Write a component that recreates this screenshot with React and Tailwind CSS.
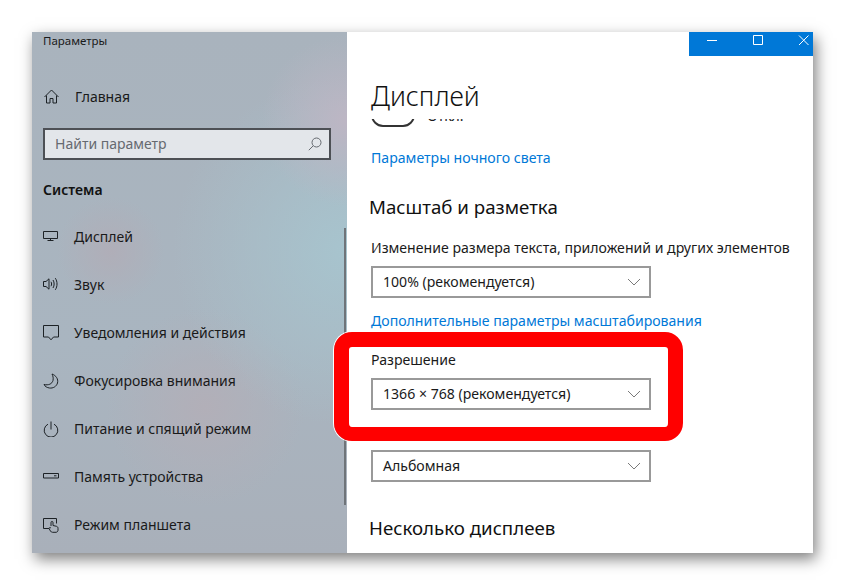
const menuItems = [
  { name: "Дисплей", icon: <MonitorIcon /> },
  { name: "Звук", icon: <SoundIcon /> },
  { name: "Уведомления и действия", icon: <NotifyIcon /> },
  { name: "Фокусировка внимания", icon: <MoonIcon /> },
  { name: "Питание и спящий режим", icon: <PowerIcon /> },
  { name: "Память устройства", icon: <StorageIcon /> },
  { name: "Режим планшета", icon: <TabletIcon /> },
];

function Icon({ children }) {
  return (
    <svg
      width="16"
      height="16"
      viewBox="0 0 16 16"
      fill="none"
      stroke="#1d2226"
      strokeWidth="1"
      className="shrink-0"
    >
      {children}
    </svg>
  );
}

function HomeIcon() {
  return (
    <Icon>
      <path d="M1.500 8 8.500 1l7 7M3.500 6.500v7.500h3.500V9.500h3v4.500h3.500V6.500" />
    </Icon>
  );
}

function MonitorIcon() {
  return (
    <Icon>
      <path d="M.5 2.500h14v7H.5zM7.500 9.500v2M4.500 11.500h6" />
    </Icon>
  );
}

function SoundIcon() {
  return (
    <Icon>
      <path d="M.5 4.500h2.500L6 1.800v10.400L3 9.500H.5zM8 4.800c.8 1.300.8 3.100 0 4.400M10 3c1.500 2.300 1.500 5.700 0 8M12.300 1.200c2.300 3.300 2.300 8.300 0 11.600" />
    </Icon>
  );
}

function NotifyIcon() {
  return (
    <Icon>
      <path d="M.5 .5h15v11.500H10.500L8 14.800 5.500 12h-5z" />
    </Icon>
  );
}

function MoonIcon() {
  return (
    <Icon>
      <path d="M9 1c4 1.500 6.500 5 5.500 9-1 3.500-4.500 5.500-8 5C4 14.700 2 13.500 1 11.500c4.500 1 8-.5 9-4 .5-2.300 0-4.500-1-6.500z" />
    </Icon>
  );
}

function PowerIcon() {
  return (
    <Icon>
      <path d="M5 3.200a6.800 6.800 0 1 0 6 0M8 .5v8" />
    </Icon>
  );
}

function StorageIcon() {
  return (
    <Icon>
      <path d="M.5 4.500h15v4.500H.5zM11 6.800h2.500" />
    </Icon>
  );
}

function TabletIcon() {
  return (
    <Icon>
      <path d="M6 11.500H.5v-10h13v5M8 9V5.500a1 1 0 0 1 2 0V8.500l3.500.8c1 .3 1.500 1 1.500 2v2c0 1-1 2-2 2H9.500c-1 0-1.500-.5-2-1.200L6 11.500c0-1 1-1.200 2-.5" />
    </Icon>
  );
}

function Chevron() {
  return (
    <svg width="14" height="8" viewBox="0 0 14 8" fill="none" stroke="#7a7a7a">
      <path d="M1 1l6 6 6-6" />
    </svg>
  );
}

function Select({ value }) {
  return (
    <div className="flex h-8 w-[280px] items-center justify-between border-2 border-[#999999] pl-[10px] pr-[8px] text-[14.1px] text-[#1a1a1a]">
      <span>{value}</span>
      <Chevron />
    </div>
  );
}

export default function App() {
  return (
    <div className="h-[585px] w-[845px] bg-white pl-8 pt-8 font-['Noto_Sans',sans-serif]">
      <div className="relative flex h-[521px] w-[781px] shadow-[3px_6px_14px_rgba(0,0,0,0.5)]">
        {/* Sidebar */}
        <aside className="relative w-[315px] shrink-0 bg-[radial-gradient(circle_at_100%_17%,#bdb6c4_0,transparent_16%),radial-gradient(circle_at_100%_42%,#a7c4ce_0,transparent_40%),radial-gradient(circle_at_55%_72%,#b2afb8_0,transparent_24%),radial-gradient(circle_at_25%_42%,#b0aeb8_0,transparent_14%),linear-gradient(180deg,#a9b3bd,#a9b5c0_60%,#a9b0ba)] pl-[11px]">
          <div className="h-[18px] text-[11.5px] leading-[18px] text-[#1a1a1a]">
            Параметры
          </div>
          <div className="mt-[23px] flex h-12 items-center gap-4 text-[14px] text-[#1a1a1a]">
            <HomeIcon />
            <span className="pb-[2px]">Главная</span>
          </div>
          <div className="mt-[7px] flex h-8 w-[288px] items-center justify-between border-2 border-[#4d5055] bg-[#e3e6ea] pl-[10px] pr-[7px] text-[14px] text-[#666a70]">
            <span className="pb-[2px]">Найти параметр</span>
            <svg width="14" height="14" viewBox="0 0 14 14" fill="none" stroke="#666a70">
              <circle cx="8.500" cy="5.500" r="4.500" />
              <path d="M5.200 8.800.8 13.200" />
            </svg>
          </div>
          <div className="mt-[18px] flex h-6 items-center pb-[2px] text-[14px] font-semibold text-[#111111]">
            Система
          </div>
          <nav className="mt-[11px]">
            {menuItems.map((item) => (
              <div
                key={item.name}
                className="flex h-12 items-center gap-[15px] text-[14px] text-[#1a1a1a]"
              >
                {item.icon}
                <span className="pb-[2px]">{item.name}</span>
              </div>
            ))}
          </nav>
          <div className="absolute left-[312px] top-[196px] h-[277px] w-[2px] bg-[#6f7479]" />
        </aside>

        {/* Content */}
        <main className="flex-1 overflow-hidden bg-white pl-6 text-[#1a1a1a]">
          <h1 className="mt-[43px] h-[44px] text-[26.6px] font-light leading-[42px] text-[#111111]">
            Дисплей
          </h1>
          <div className="h-[8px] overflow-hidden">
            <div className="-mt-[16px] flex items-center gap-[12px]">
              <div className="h-6 w-11 rounded-full border-2 border-[#333333]" />
              <span className="text-[14px]">Откл.</span>
            </div>
          </div>
          <a className="mt-[21px] block h-5 text-[14.1px] leading-5 text-[#0078d7]">
            Параметры ночного света
          </a>
          <h2 className="-ml-[2px] mt-[25px] h-[28px] text-[18.7px] leading-[28px] text-[#111111]">
            Масштаб и разметка
          </h2>
          <p className="mt-[17px] h-5 text-[14.1px] leading-5">
            Изменение размера текста, приложений и других элементов
          </p>
          <div className="mt-2">
            <Select value="100% (рекомендуется)" />
          </div>
          <a className="mt-[13px] block h-5 text-[14.1px] leading-5 text-[#0078d7]">
            Дополнительные параметры масштабирования
          </a>
          <p className="mt-[19px] h-5 text-[14.1px] leading-5">Разрешение</p>
          <div className="mt-2">
            <Select value="1366 × 768 (рекомендуется)" />
          </div>
          <div className="mt-10">
            <Select value="Альбомная" />
          </div>
          <h2 className="-ml-[2px] mt-[32px] h-[28px] text-[18.7px] leading-[28px] text-[#111111]">
            Несколько дисплеев
          </h2>
        </main>

        {/* Window buttons */}
        <div className="absolute right-0 top-0 flex h-6 w-[124px] items-start bg-[#0078d7] pl-[18px] pt-[3px]">
          <svg width="102" height="12" viewBox="0 0 102 12" fill="none" stroke="white">
            <path d="M0 5.500h10M46.500 .5h9v9h-9zM92 .5l9.500 9.500M101.500 .5 92 10" />
          </svg>
        </div>

        {/* Red annotation */}
        <div className="absolute left-[302px] top-[300px] h-[109px] w-[349px] rounded-[18px] border-x-[15px] border-b-[14px] border-t-[15px] border-[#ff0000] shadow-[0_0_0_1px_white]" />
      </div>
    </div>
  );
}
